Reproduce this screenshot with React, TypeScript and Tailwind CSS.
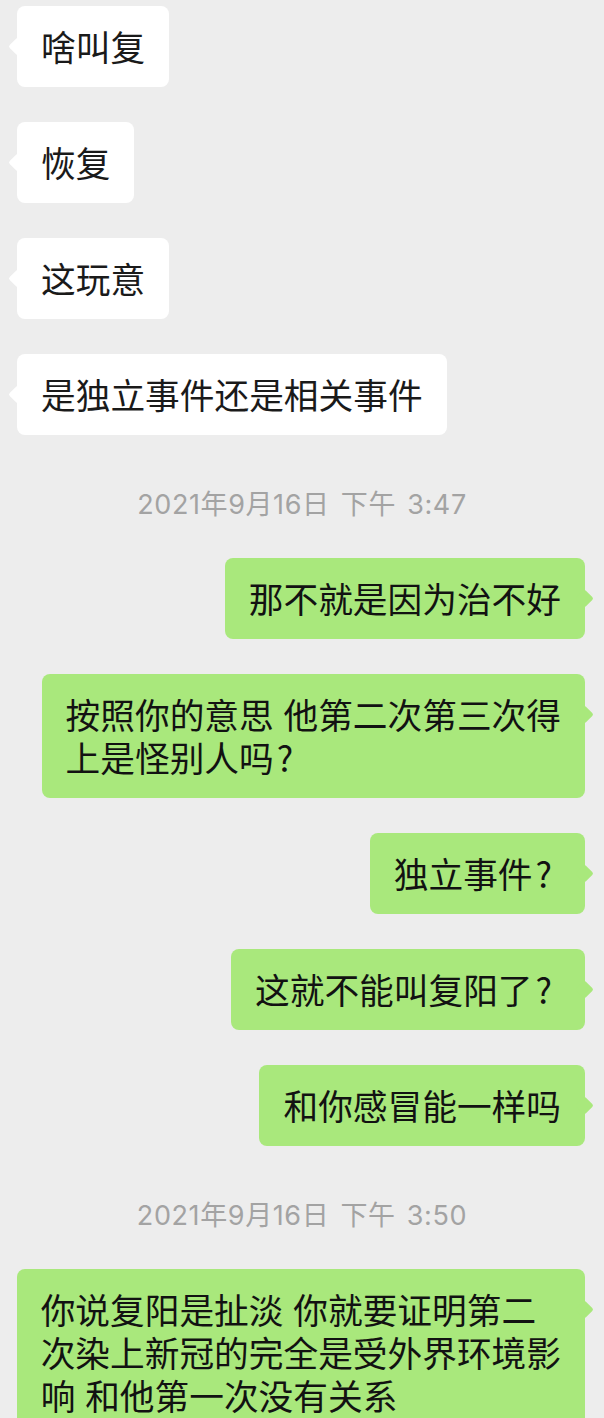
import React from "react";

type Msg =
  | { kind: "in"; lines: string[] }
  | { kind: "out"; lines: string[] }
  | { kind: "time"; text: string };

const messages: Msg[] = [
  { kind: "in", lines: ["啥叫复"] },
  { kind: "in", lines: ["恢复"] },
  { kind: "in", lines: ["这玩意"] },
  { kind: "in", lines: ["是独立事件还是相关事件"] },
  { kind: "time", text: "2021年9月16日 下午 3:47" },
  { kind: "out", lines: ["那不就是因为治不好"] },
  { kind: "out", lines: ["按照你的意思 他第二次第三次得", "上是怪别人吗?"] },
  { kind: "out", lines: ["独立事件?"] },
  { kind: "out", lines: ["这就不能叫复阳了?"] },
  { kind: "out", lines: ["和你感冒能一样吗"] },
  { kind: "time", text: "2021年9月16日 下午 3:50" },
  {
    kind: "out",
    lines: ["你说复阳是扯淡 你就要证明第二", "次染上新冠的完全是受外界环境影", "响 和他第一次没有关系"],
  },
];

const font = { fontFamily: '"Noto Sans CJK SC", "Noto Sans", sans-serif' };
const timeFont = { fontFamily: 'Inter, "Noto Sans CJK SC", sans-serif' };

function Line({ text }: { text: string }) {
  const parts = text.split("?");
  return (
    <div className="relative whitespace-nowrap [word-spacing:2px]">
      {parts.map((p, i) => (
        <React.Fragment key={i}>
          {p}
          {i < parts.length - 1 && <span className="pl-[3px] pr-[9px]">?</span>}
        </React.Fragment>
      ))}
    </div>
  );
}

function Bubble({ side, lines }: { side: "in" | "out"; lines: string[] }) {
  const isIn = side === "in";
  return (
    <div className={isIn ? "flex justify-start pl-[17px]" : "flex justify-end pr-[19px]"}>
      <div
        className={
          "relative rounded-[8px] px-[24px] py-[19px] text-[34.7px] leading-[43px] " +
          (isIn ? "bg-white text-[#1a1a1a]" : "bg-[#a9e87c] text-[#121212]")
        }
      >
        <span
          className={
            "absolute top-[34px] h-[13px] w-[13px] rotate-45 rounded-[2px] " +
            (isIn ? "left-[-6px] bg-white" : "right-[-6px] bg-[#a9e87c]")
          }
        />
        {lines.map((l, i) => (
          <Line key={i} text={l} />
        ))}
      </div>
    </div>
  );
}

function Time({ text }: { text: string }) {
  return (
    <div
      className="h-[53px] whitespace-nowrap pt-[15px] text-center text-[27px] leading-[40px] tracking-[0.6px] text-[#a3a3a3] [word-spacing:3px]"
      style={timeFont}
    >
      {text}
    </div>
  );
}

export default function App() {
  return (
    <div className="min-h-[1418px] w-[604px] overflow-hidden bg-[#ededed]" style={font}>
      <div className="flex flex-col gap-[35px] pt-[6px]">
        {messages.map((m, i) =>
          m.kind === "time" ? (
            <Time key={i} text={m.text} />
          ) : (
            <Bubble key={i} side={m.kind} lines={m.lines} />
          )
        )}
      </div>
    </div>
  );
}
